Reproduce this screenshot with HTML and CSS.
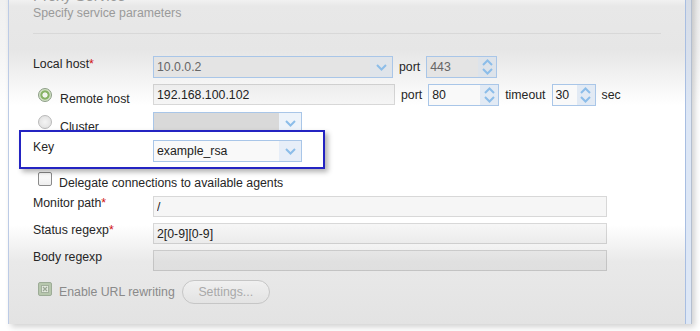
FILE: index.html
```html
<!DOCTYPE html>
<html lang="en">
<head>
  <meta charset="UTF-8" />
  <title>Proxy Service</title>
  <link rel="stylesheet" href="styles.css">
</head>
<body>
  <div class="window">
    <div class="panel">
      <div class="title">Proxy Service</div>
      <div class="subtitle">Specify service parameters</div>
      <div class="divider"></div>

      <form class="form">
        <div class="row">
          <label class="label">Local host<span class="req">*</span></label>
          <div class="select disabled w-local">
            <span class="value">10.0.0.2</span>
            <span class="arrow"><svg width="11" height="7" viewBox="0 0 11 7"><polyline points="1,1 5.5,5.5 10,1" /></svg></span>
          </div>
          <span class="inline-label">port</span>
          <div class="spin disabled w-port">
            <span class="value">443</span>
            <span class="spin-btns">
              <svg width="11" height="7" viewBox="0 0 11 7"><polyline points="1,6 5.5,1.5 10,6" /></svg>
              <svg width="11" height="7" viewBox="0 0 11 7"><polyline points="1,1 5.5,5.5 10,1" /></svg>
            </span>
          </div>
        </div>

        <div class="row row-remote">
          <label class="label radio-label"><span class="radio checked"></span><span class="radio-text">Remote host</span></label>
          <input class="text w-remote" type="text" value="192.168.100.102">
          <span class="inline-label">port</span>
          <div class="spin w-port">
            <span class="value">80</span>
            <span class="spin-btns">
              <svg width="11" height="7" viewBox="0 0 11 7"><polyline points="1,6 5.5,1.5 10,6" /></svg>
              <svg width="11" height="7" viewBox="0 0 11 7"><polyline points="1,1 5.5,5.5 10,1" /></svg>
            </span>
          </div>
          <span class="inline-label">timeout</span>
          <div class="spin w-timeout">
            <span class="value">30</span>
            <span class="spin-btns">
              <svg width="11" height="7" viewBox="0 0 11 7"><polyline points="1,6 5.5,1.5 10,6" /></svg>
              <svg width="11" height="7" viewBox="0 0 11 7"><polyline points="1,1 5.5,5.5 10,1" /></svg>
            </span>
          </div>
          <span class="inline-label">sec</span>
        </div>

        <div class="row row-cluster">
          <label class="label radio-label"><span class="radio"></span><span class="radio-text">Cluster</span></label>
          <div class="select empty w-short">
            <span class="value"></span>
            <span class="arrow"><svg width="11" height="7" viewBox="0 0 11 7"><polyline points="1,1 5.5,5.5 10,1" /></svg></span>
          </div>
        </div>

        <div class="row highlight">
          <label class="label">Key</label>
          <div class="select w-short">
            <span class="value">example_rsa</span>
            <span class="arrow"><svg width="11" height="7" viewBox="0 0 11 7"><polyline points="1,1 5.5,5.5 10,1" /></svg></span>
          </div>
        </div>

        <div class="row row-check">
          <span class="checkbox"></span>
          <span class="check-text">Delegate connections to available agents</span>
        </div>

        <div class="row row-field">
          <label class="label">Monitor path<span class="req">*</span></label>
          <input class="text w-wide" type="text" value="/">
        </div>

        <div class="row row-field">
          <label class="label">Status regexp<span class="req">*</span></label>
          <input class="text w-wide" type="text" value="2[0-9][0-9]">
        </div>

        <div class="row row-field">
          <label class="label">Body regexp</label>
          <input class="text w-wide" type="text" value="">
        </div>

        <div class="row row-rewrite">
          <span class="checkbox-disabled">
            <svg width="14" height="14" viewBox="0 0 14 14">
              <rect x="0.5" y="0.5" width="13" height="13" rx="1.5" fill="#b7c7ad" stroke="#9dac97" />
              <rect x="3.5" y="3.5" width="7" height="7" fill="#e3e9df" stroke="#a3b09d" />
              <path d="M5 5 L9 9 M9 5 L5 9" stroke="#9aa694" stroke-width="1.2" />
            </svg>
          </span>
          <span class="check-text disabled-text">Enable URL rewriting</span>
          <button class="settings" type="button" disabled>Settings...</button>
        </div>
      </form>
    </div>
  </div>
</body>
</html>
```

FILE: styles.css
```css
html, body {
  height: 331px;
  overflow: hidden;
}
body {
  margin: 0;
  font-family: "Liberation Sans", Arial, sans-serif;
  font-size: 12.3px;
  color: #262626;
  background: linear-gradient(to bottom, #f0f0f0 0, #f4f4f4 50px, #fff 105px);
}
.window {
  box-sizing: border-box;
  width: 684px;
  height: 338px;
  margin: -14px 0 0 8px;
  border-left: 1px solid #bccbe6;
  border-right: 1px solid #b4bfd0;
  padding-right: 5px;
  background: linear-gradient(to bottom, #d6dce6 0, #d9e1ee 80px, #dde7f6 130px);
  box-shadow: 3px 3px 6px rgba(0,0,0,0.18);
}
.panel {
  box-sizing: border-box;
  height: 100%;
  padding: 0 24px;
  border-right: 1px solid #a8bee2;
  background: linear-gradient(to bottom,
    #f1f1f1 0, #f1f1f1 14px, #e8e8e8 20px, #e6e6e6 64px,
    #fff 119px, #fff 239px, #e9e9e9 276px, #e3e3e3 338px);
}
.title {
  font-size: 15px;
  line-height: 20px;
  color: #9a9a9a;
}
.subtitle {
  line-height: 15px;
  color: #9a9a9a;
}
.divider {
  margin-top: 12px;
  border-top: 1px solid #d8d8d8;
}
.form {
  margin-top: 22px;
}
.row {
  display: flex;
  align-items: center;
  height: 22px;
}
.label {
  flex: 0 0 120px;
  align-self: flex-start;
  line-height: 14px;
  padding-top: 1px;
}
.req {
  color: #d01010;
}
.inline-label {
  margin: 0 6px;
}
.row-remote, .row-cluster {
  margin-top: 6px;
}
.radio-label {
  box-sizing: border-box;
  display: flex;
  align-items: flex-start;
  height: 22px;
  padding: 0 0 0 5px;
}
.radio {
  box-sizing: border-box;
  flex: 0 0 14px;
  width: 14px;
  height: 14px;
  margin: 3px 8px 0 0;
  border-radius: 50%;
  border: 1px solid #b9b9b9;
  background: radial-gradient(circle, #f4f4f4 0, #dcdcdc 100%);
}
.radio.checked {
  margin-top: 4px;
  border-color: #8c9d86;
  background: radial-gradient(circle, #f1f5ee 0, #f1f5ee 2.2px, #86b264 3px, #86b264 4.2px, #cfe0c2 5px);
}
.radio-text {
  margin-top: 8px;
}
.select, .spin {
  box-sizing: border-box;
  display: flex;
  height: 22px;
  border: 1px solid #a9c6e8;
  background: #f9f9f9;
}
.select .value, .spin .value {
  flex: 1;
  padding-left: 3px;
  line-height: 20px;
  color: #222;
  white-space: nowrap;
  overflow: hidden;
}
.select.disabled, .spin.disabled {
  background: #e4e4e4;
}
.select.disabled .value, .spin.disabled .value {
  color: #666;
}
.select.empty {
  background: #d9d9d9;
}
.arrow {
  flex: 0 0 22px;
  display: flex;
  align-items: center;
  justify-content: center;
  background: #e7eef8;
}
.select.disabled .arrow {
  background: #dfe4ea;
}
.select.empty .arrow {
  background: #edf3fa;
}
.arrow polyline, .spin-btns polyline {
  fill: none;
  stroke: #8cbde9;
  stroke-width: 2;
}
.spin-btns {
  box-sizing: border-box;
  flex: 0 0 18px;
  display: flex;
  flex-direction: column;
  align-items: center;
  justify-content: space-between;
  padding: 2px 0;
  background: #e2eaf4;
}
.spin.disabled .spin-btns {
  background: #dde3ea;
}
.w-local { width: 240px; }
.w-port { width: 71px; }
.w-timeout { width: 44px; }
.w-short { width: 149px; }
.w-remote { width: 242px; }
.w-wide { width: 454px; }
.text {
  box-sizing: border-box;
  height: 21px;
  margin: 0;
  padding: 0 3px;
  border: 1px solid rgba(0,0,0,0.12);
  background: rgba(0,0,0,0.035);
  font: inherit;
  color: #222;
  outline: none;
}
.row-remote .text {
  align-self: flex-start;
}
.highlight {
  position: relative;
  z-index: 1;
  box-sizing: border-box;
  width: 306px;
  height: 39px;
  margin: -4px 0 0 -14px;
  padding: 8px 0 5px 12px;
  border: 2px solid #2424c2;
  background: #fff;
  box-shadow: 3px 3px 5px rgba(0,0,0,0.3);
  align-items: flex-start;
}
.highlight .label {
  padding-top: 0;
}
.row-check {
  margin-top: 3px;
  height: 18px;
  align-items: flex-start;
  padding-left: 5px;
}
.checkbox {
  box-sizing: border-box;
  width: 14px;
  height: 14px;
  border: 1px solid #8a8a8a;
  border-radius: 2px;
  background: linear-gradient(to bottom, #fff, #eee);
}
.check-text {
  margin-left: 7px;
  padding-top: 4px;
  line-height: 14px;
}
.row-field {
  margin-top: 6px;
  height: 21px;
  align-items: flex-start;
}
.row-field .label {
  padding-top: 0;
}
.row-rewrite {
  margin-top: 9px;
  height: 24px;
  align-items: flex-start;
  padding-left: 5px;
}
.checkbox-disabled {
  margin-top: 2px;
  height: 14px;
}
.checkbox-disabled svg {
  display: block;
}
.disabled-text {
  color: #8a8a8a;
  padding-top: 5px;
}
.settings {
  box-sizing: border-box;
  width: 88px;
  height: 24px;
  margin-left: 7px;
  border: 1px solid #c6c6c6;
  border-radius: 12px;
  background: linear-gradient(to bottom, #f0f0f0, #e3e3e3);
  font: inherit;
  color: #a9a9a9;
}
```
